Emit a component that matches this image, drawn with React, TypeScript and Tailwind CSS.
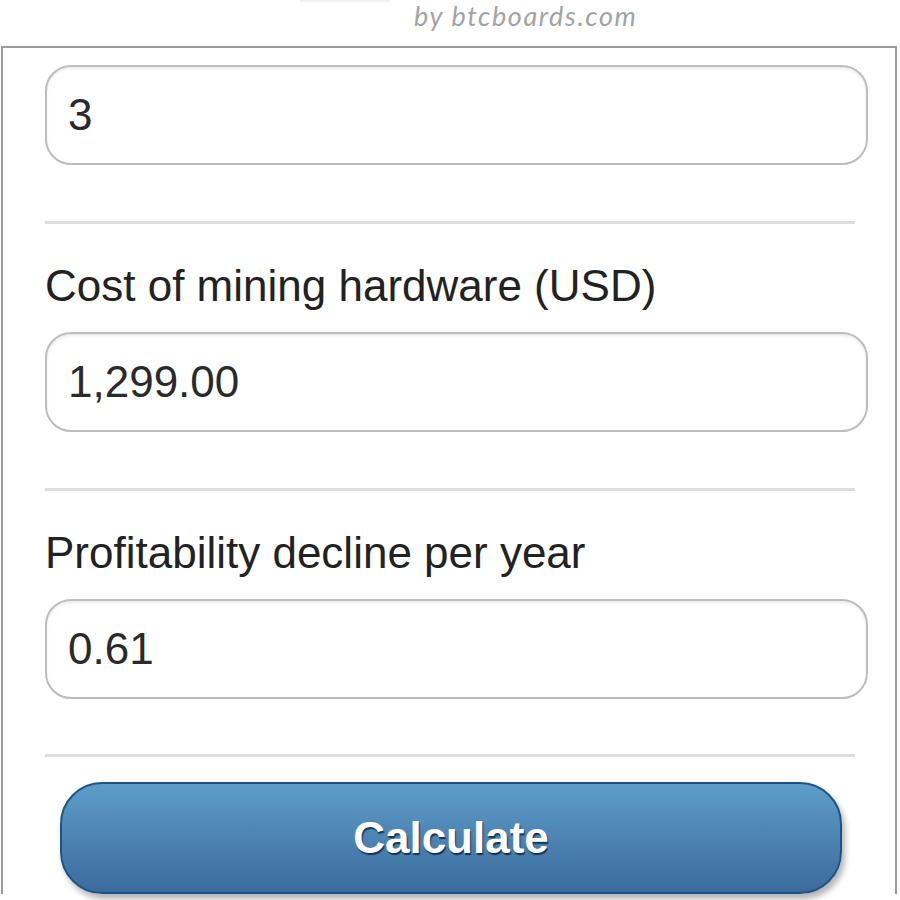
import React from 'react';

type Field = {
  label?: string;
  value: string;
};

const fields: Field[] = [
  { value: '3' },
  { label: 'Cost of mining hardware (USD)', value: '1,299.00' },
  { label: 'Profitability decline per year', value: '0.61' },
];

function Divider() {
  return <div className="mr-[13px] h-[3px] bg-[#dedede]" />;
}

function FieldBlock({ field, last }: { field: Field; last: boolean }) {
  return (
    <div>
      {field.label ? (
        <label className="mt-[37px] block text-[44px] leading-[50px] text-[#222]">{field.label}</label>
      ) : null}
      <input
        readOnly
        value={field.value}
        className={`${field.label ? 'mt-[21px]' : ''} block h-[100px] w-full rounded-[26px] border-2 border-[#bdbdbd] bg-white px-[21px] text-[44px] text-[#2a2a2a] shadow-[inset_0_2px_3px_rgba(0,0,0,0.08)] outline-none`}
      />
      <div className={last ? 'mt-[55px]' : 'mt-[56px]'}>
        <Divider />
      </div>
    </div>
  );
}

export default function App() {
  return (
    <div className="h-[900px] w-[900px] overflow-hidden bg-white font-['Liberation_Sans',Arial,sans-serif]">
      <div className="relative h-[46px]">
        <div className="absolute left-[300px] top-0 h-[2px] w-[90px] bg-[#f1f1f1]" />
        <div className="pl-[414px] font-['Lato','Open_Sans',sans-serif] text-[27px] italic leading-[32px] tracking-[1.6px] text-[#a3a3a3]">
          by btcboards.com
        </div>
      </div>
      <div className="ml-[1px] w-[896px] border-x-2 border-t-2 border-[#9a9a9a] pl-[42px] pr-[27px] pt-[17px]">
        {fields.map((field, i) => (
          <FieldBlock key={i} field={field} last={i === fields.length - 1} />
        ))}
        <div className="mt-[25px] pl-[15px] pr-[26px]">
          <button
            type="button"
            className="block h-[112px] w-full rounded-[42px] border-2 border-[#1c5585] bg-gradient-to-b from-[#5e9dc9] to-[#3b6b9c] text-[44px] font-bold text-white shadow-[3px_5px_6px_rgba(0,0,0,0.3)] [text-shadow:1px_2px_1px_rgba(10,30,60,0.8)]"
          >
            Calculate
          </button>
        </div>
      </div>
    </div>
  );
}
